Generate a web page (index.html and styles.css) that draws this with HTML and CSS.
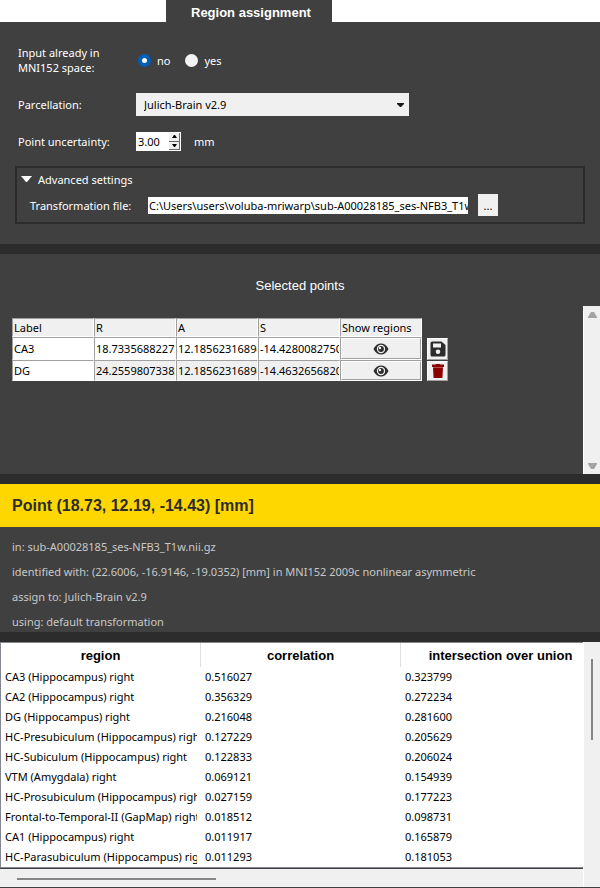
FILE: index.html
```html
<!DOCTYPE html>
<html lang="en">
<head>
<meta charset="utf-8">
<meta name="viewport" content="width=device-width, initial-scale=1">
<title>Region assignment</title>
<link rel="stylesheet" href="styles.css">
</head>
<body>
<svg class="sprite" aria-hidden="true">
  <symbol id="eye" viewBox="0 0 16 12">
    <path d="M0.500 6C2.500 2.300 5 0.500 8 0.500S13.500 2.300 15.500 6C13.500 9.700 11 11.500 8 11.500S2.500 9.700 0.500 6Z" fill="#2c2c2c"/>
    <circle cx="8" cy="6" r="4.200" fill="#f0f0f0"/>
    <circle cx="8" cy="6" r="2.900" fill="#2c2c2c"/>
    <circle cx="7" cy="5" r="1.200" fill="#f0f0f0"/>
  </symbol>
</svg>

<header class="tabs"><h1 class="tab">Region assignment</h1></header>

<main>
  <form class="panel settings">
    <div class="row row-space" role="radiogroup" aria-labelledby="space-name">
      <span class="name" id="space-name">Input already in MNI152 space:</span>
      <label class="choice"><input type="radio" name="mni" checked>no</label>
      <label class="choice"><input type="radio" name="mni">yes</label>
    </div>
    <div class="row">
      <label class="name" for="parcellation">Parcellation:</label>
      <span class="combo">
        <select id="parcellation"><option>Julich-Brain v2.9</option></select>
        <svg class="combo-arrow" viewBox="0 0 7 4" aria-hidden="true"><path d="M0 0H7V1L4 4H3L0 1Z"/></svg>
      </span>
    </div>
    <div class="row">
      <label class="name" for="uncertainty">Point uncertainty:</label>
      <span class="spin">
        <input id="uncertainty" type="text" inputmode="decimal" value="3.00">
        <span class="spin-buttons">
          <button type="button" aria-label="Increase"><svg viewBox="0 0 5 3"><path d="M2 0H3L5 3H0Z"/></svg></button>
          <button type="button" aria-label="Decrease"><svg viewBox="0 0 5 3"><path d="M0 0H5L3 3H2Z"/></svg></button>
        </span>
      </span>
      <span class="unit">mm</span>
    </div>
    <details class="advanced" open>
      <summary><svg viewBox="0 0 11 6" aria-hidden="true"><path d="M0 0H11L6 6H5Z"/></svg>Advanced settings</summary>
      <div class="file">
        <label for="transform">Transformation file:</label>
        <input id="transform" type="text" value="C:\Users\users\voluba-mriwarp\sub-A00028185_ses-NFB3_T1w.mat">
        <button type="button">...</button>
      </div>
    </details>
  </form>

  <section class="panel selected">
    <h2>Selected points</h2>
    <div class="points-view">
      <table class="points">
        <thead>
          <tr><th>Label</th><th>R</th><th>A</th><th>S</th><th>Show regions</th></tr>
        </thead>
        <tbody>
          <tr>
            <td><input aria-label="Label" value="CA3"></td>
            <td><input aria-label="R" value="18.73356882272"></td>
            <td><input aria-label="A" value="12.18562316894"></td>
            <td><input aria-label="S" value="-14.4280082750"></td>
            <td><button type="button" class="show" aria-label="Show regions of CA3"><svg><use href="#eye"/></svg></button></td>
            <td class="action"><button type="button" aria-label="Save points"><svg viewBox="0 0 16 16"><path fill="#2c2c2c" fill-rule="evenodd" d="M2 0.500H11.500L15.500 4V14A1.500 1.500 0 0 1 14 15.500H2A1.500 1.500 0 0 1 0.500 14V2A1.500 1.500 0 0 1 2 0.500ZM3 2.500V6.500H11V2.500ZM8 8.500A2.300 2.300 0 1 0 8 13.100A2.300 2.300 0 1 0 8 8.500Z"/></svg></button></td>
          </tr>
          <tr class="locked">
            <td><input aria-label="Label" value="DG"></td>
            <td><input aria-label="R" readonly value="24.25598073385"></td>
            <td><input aria-label="A" readonly value="12.18562316894"></td>
            <td><input aria-label="S" readonly value="-14.4632656820"></td>
            <td><button type="button" class="show" aria-label="Show regions of DG"><svg><use href="#eye"/></svg></button></td>
            <td class="action"><button type="button" aria-label="Delete DG"><svg viewBox="0 0 16 16"><path fill="#8b0000" d="M2 1.500H5.500L6 1H10L10.500 1.500H14V4H2ZM3 4.500H13L12.400 15H3.600Z"/><path fill="#b85050" d="M3 4H13V5H3Z"/></svg></button></td>
          </tr>
        </tbody>
      </table>
      <div class="scroll-arrows" aria-hidden="true">
        <svg viewBox="0 0 9 6"><path d="M3 0H6L9 5V6H0V5Z"/></svg>
        <svg viewBox="0 0 9 6"><path d="M0 0H9V1L6 6H3L0 1Z"/></svg>
      </div>
    </div>
  </section>

  <section class="assignment">
    <h2 class="point">Point (18.73, 12.19, -14.43) [mm]</h2>
    <div class="info">
      <p>in: sub-A00028185_ses-NFB3_T1w.nii.gz</p>
      <p>identified with: (22.6006, -16.9146, -19.0352) [mm] in MNI152 2009c nonlinear asymmetric</p>
      <p>assign to: Julich-Brain v2.9</p>
      <p>using: default transformation</p>
    </div>
  </section>

  <section class="results">
    <div class="results-view">
      <table>
        <thead><tr><th>region</th><th>correlation</th><th>intersection over union</th></tr></thead>
        <tbody>
          <tr><td><span>CA3 (Hippocampus) right</span></td><td>0.516027</td><td>0.323799</td></tr>
          <tr><td><span>CA2 (Hippocampus) right</span></td><td>0.356329</td><td>0.272234</td></tr>
          <tr><td><span>DG (Hippocampus) right</span></td><td>0.216048</td><td>0.281600</td></tr>
          <tr><td><span>HC-Presubiculum (Hippocampus) right</span></td><td>0.127229</td><td>0.205629</td></tr>
          <tr><td><span>HC-Subiculum (Hippocampus) right</span></td><td>0.122833</td><td>0.206024</td></tr>
          <tr><td><span>VTM (Amygdala) right</span></td><td>0.069121</td><td>0.154939</td></tr>
          <tr><td><span>HC-Prosubiculum (Hippocampus) right</span></td><td>0.027159</td><td>0.177223</td></tr>
          <tr><td><span>Frontal-to-Temporal-II (GapMap) right</span></td><td>0.018512</td><td>0.098731</td></tr>
          <tr><td><span>CA1 (Hippocampus) right</span></td><td>0.011917</td><td>0.165879</td></tr>
          <tr><td><span>HC-Parasubiculum (Hippocampus) right</span></td><td>0.011293</td><td>0.181053</td></tr>
        </tbody>
      </table>
    </div>
    <div class="bar-y" aria-hidden="true"><i></i></div>
    <div class="bar-x" aria-hidden="true"><i></i></div>
  </section>
</main>
</body>
</html>
```
FILE: styles.css
```css
* { box-sizing: border-box; }

body {
  margin: 0;
  background: #404040;
  color: #fff;
  font: 11px/15px "Noto Sans", "Open Sans", sans-serif;
}

h1, h2, p { margin: 0; }
svg { display: block; }
input, select, button {
  font: inherit;
  color: #000;
  margin: 0;
  padding: 0;
  border: 0;
  border-radius: 0;
  min-width: 0;
}

.sprite { position: absolute; width: 0; height: 0; }

.tabs { display: flex; padding-left: 166px; background: #fff; }
.tab {
  padding: 2px 21px 0 25px;
  height: 22px;
  background: #404040;
  font: bold 13px/22px "Liberation Sans", sans-serif;
}

.panel { border-bottom: 10px solid #2c2c2c; }

/* Settings form */
.settings { padding: 23px 15px 20px; }
.row { display: flex; align-items: center; padding-left: 3px; margin-bottom: 16px; }
.row-space { margin-bottom: 18px; }
.name { flex: none; width: 118px; padding-right: 20px; }
.row-space .name { padding-right: 30px; }
.choice { display: flex; align-items: center; gap: 6px; margin: 0 13px 0 2px; }
.choice input {
  appearance: none;
  width: 13px;
  height: 13px;
  border-radius: 50%;
  background: #f3f3f3;
}
.choice input:checked { border: 4px solid #005fb8; background: #fff; }

.combo { position: relative; flex: 0 1 273px; }
.combo select { display: block; appearance: none; width: 100%; height: 23px; padding: 0 8px; background: #f0f0f0; }
.combo-arrow { position: absolute; right: 5px; top: 10px; width: 7px; height: 4px; pointer-events: none; fill: #1a1a1a; }

.spin { display: flex; width: 45px; height: 19px; padding: 1px; background: #fff; }
.spin input { flex: 1; width: 0; padding-left: 1px; background: none; }
.spin-buttons { display: flex; flex-direction: column; width: 11px; }
.spin button {
  flex: 1;
  display: grid;
  place-items: center;
  background: #f0f0f0;
  border: solid;
  border-width: 0 1px 1px 0;
  border-color: #696969;
}
.spin svg { width: 5px; height: 3px; }
.unit { margin-left: 13px; }

.advanced { padding: 3px 5px 4px 4px; border: 2px solid #2c2c2c; margin-top: -1px; }
.advanced summary { display: flex; align-items: center; gap: 6px; height: 16px; list-style: none; }
.advanced summary svg { width: 11px; height: 6px; fill: #fff; }
.file { display: flex; align-items: center; margin-top: 7px; padding: 0 0 2px 9px; }
.file label { flex: none; width: 118px; }
.file input { flex: 0 1 320px; height: 17px; padding-left: 1px; background: #fff; }
.file button { width: 20px; height: 22px; margin-left: 10px; background: #f0f0f0; }

/* Selected points */
.selected h2 { padding: 24px 0 12px; font: 13px/16px "Liberation Sans", sans-serif; text-align: center; }
.points-view { display: flex; justify-content: space-between; align-items: flex-start; min-height: 168px; }
.points { margin: 12px 0 0 12px; border-spacing: 0; table-layout: fixed; width: 436px; color: #000; }
.points th, .points td { width: 82px; padding: 0; }
.points th {
  height: 19px;
  padding-left: 1px;
  background: #f0f0f0;
  font-weight: normal;
  text-align: left;
  white-space: nowrap;
}
.points th, .points td:not(.action) {
  border: 1px solid #fff;
  border-top-color: #a0a0a0;
  border-left-color: #a0a0a0;
}
.points td:not(.action) { background: #fff; }
.points td input { display: block; width: 100%; height: 21px; padding-left: 1px; background: #fff; }
.points .locked input { height: 19px; }
.points input:read-only { background: #f0f0f0; }
.points td button { display: grid; place-items: center; width: 100%; height: 21px; background: #f0f0f0; border: 1px solid #a0a0a0; border-top-color: #fff; border-left-color: #fff; }
.points .locked button { height: 19px; }
.show svg { width: 16px; height: 12px; }
.points .action { width: 26px; padding-left: 5px; }
.points .action button { height: 22px; }
.points .locked .action button { height: 20px; }
.action svg { width: 16px; height: 16px; }

.scroll-arrows {
  display: flex;
  flex-direction: column;
  justify-content: space-between;
  align-items: center;
  align-self: stretch;
  width: 17px;
  padding: 6px 0 5px;
  background: #f0f0f0;
  border-left: 1px solid #fff;
}
.scroll-arrows svg { width: 9px; height: 6px; fill: #a3a3a3; }

/* Assigned point */
.point { padding: 11px 12px; background: gold; color: #2c2c2c; font: bold 16px/21px "Liberation Sans", sans-serif; }
.info { padding: 7px 12px 0; height: 115px; border-bottom: 10px solid #2c2c2c; color: #c8c8c8; line-height: 25px; }

/* Results */
.results { display: grid; grid-template-columns: minmax(0, 1fr) 17px; background: #f0f0f0; border-bottom: 1px solid #404040; }
.results-view { overflow: hidden; background: #fff; border: 1px solid #828790; border-right: 0; }
.results table { width: 100%; min-width: 600px; table-layout: fixed; border-spacing: 0; color: #000; }
.results th { height: 24px; padding: 2px 0 0; border-right: 1px solid #e0e0e0; font: bold 13px/22px "Liberation Sans", sans-serif; }
.results td { height: 20px; padding: 0 4px; line-height: 20px; }
.results td span { display: block; overflow: hidden; white-space: nowrap; }
.bar-y { grid-row: 1 / 3; grid-column: 2; padding: 17px 0 0 7px; border-left: 1px solid #fff; }
.bar-y i { display: block; width: 2px; height: 81px; background: #868686; }
.bar-x { height: 19px; padding: 9px 0 0 17px; border-top: 1px solid #404040; }
.bar-x i { display: block; width: 199px; height: 2px; background: #868686; }
```
